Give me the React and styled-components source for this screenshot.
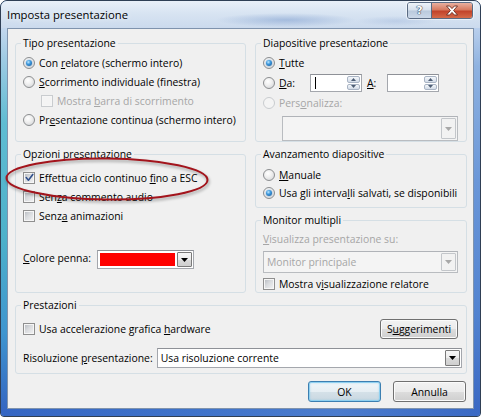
import React from "react";
import styled, { createGlobalStyle, css } from "styled-components";

const FONT = `"Open Sans", "Noto Sans", "DejaVu Sans", sans-serif`;

const GlobalStyle = createGlobalStyle`
  html, body { margin: 0; padding: 0; background: #ffffff; }
  * { box-sizing: border-box; }
`;

const Window = styled.div`
  width: 481px;
  height: 417px;
  border: 1px solid #2f3f55;
  border-radius: 7px 7px 4px 4px;
  overflow: hidden;
  display: flex;
  flex-direction: column;
  font-family: ${FONT};
  font-size: 10.4px;
  color: #000;
  background: #4f86cf;
  box-shadow: inset 0 0 0 1px rgba(255, 255, 255, 0.45);
`;

const TitleBar = styled.div`
  height: 27px;
  flex: none;
  display: flex;
  align-items: flex-start;
  padding: 0 7px 0 6px;
  background:
    radial-gradient(ellipse 70px 7px at 285px 19px, rgba(110, 145, 200, 0.45), rgba(110, 145, 200, 0) 100%),
    radial-gradient(ellipse 40px 5px at 395px 20px, rgba(150, 175, 215, 0.35), rgba(150, 175, 215, 0) 100%),
    linear-gradient(to bottom, #e9f0f8 0%, #d8e4f2 45%, #cbdaed 100%);
`;

const TitleText = styled.div`
  font-size: 11.3px;
  line-height: 14px;
  margin-top: 7px;
  color: #000;
  text-shadow: 0 0 6px rgba(255, 255, 255, 0.9);
`;

const CaptionButtons = styled.div`
  margin-left: auto;
  margin-top: 1px;
  display: flex;
  height: 17px;
  border: 1px solid #5a6b83;
  border-radius: 3px;
  overflow: hidden;
  box-shadow: 0 0 0 1px rgba(255, 255, 255, 0.5);
`;

const HelpButton = styled.div`
  width: 24px;
  display: flex;
  align-items: center;
  justify-content: center;
  border-right: 1px solid #5a6b83;
  background: linear-gradient(to bottom, #eef3f9 0%, #d6e0ec 48%, #b9c9dc 52%, #cbd8e8 100%);
`;

const HelpGlyph = styled.span`
  font-family: "DejaVu Sans", sans-serif;
  font-weight: bold;
  font-size: 11px;
  line-height: 12px;
  color: #ffffff;
  text-shadow: 0 0 1px #2d3d57, 0 0 1px #2d3d57, 0 0 1px #2d3d57;
`;

const CloseButton = styled.div`
  width: 40px;
  display: flex;
  align-items: center;
  justify-content: center;
  background: linear-gradient(to bottom, #e8b0a0 0%, #d77a60 45%, #c2432a 55%, #d56a48 100%);
`;

const Middle = styled.div`
  flex: 1;
  display: flex;
`;

const Edge = styled.div`
  width: 6px;
  flex: none;
  background: ${(p) =>
    p.$side === "left"
      ? "linear-gradient(to bottom, #c3d7ee 0%, #9fcbe4 8%, #5fbcd2 25%, #4db1ca 55%, #3f95cf 80%, #3467c2 100%)"
      : "linear-gradient(to bottom, #b9cfec 0%, #8fb2e0 10%, #6b97d8 40%, #5283d0 75%, #3b69c3 100%)"};
`;

const BottomEdge = styled.div`
  height: 7px;
  flex: none;
  background: linear-gradient(to right, #3566c3 0%, #3f73ca 40%, #4b7ccd 70%, #3a69c4 100%);
`;

const Client = styled.div`
  width: 467px;
  height: 381px;
  flex: none;
  background: #f0f0f0;
  border: 1px solid #7f93ad;
  padding: 14px 6px 0 7px;
  display: flex;
  flex-direction: column;
  gap: 12px;
`;

const TwoCols = styled.div`
  display: grid;
  grid-template-columns: 231px 212px;
  column-gap: 9px;
`;

const Stack = styled.div`
  display: flex;
  flex-direction: column;
  gap: 12px;
`;

const Group = styled.div`
  position: relative;
  height: ${(p) => p.$h}px;
  border: 1px solid #d5dfe5;
  border-radius: 3px;
  padding: 0 8px 0 7px;
  display: flex;
  flex-direction: column;
`;

const Caption = styled.div`
  align-self: flex-start;
  height: 14px;
  line-height: 14px;
  margin: -8px 0 ${(p) => p.$gap ?? 3}px -2px;
  padding: 0 2px;
  background: #f0f0f0;
  white-space: nowrap;
`;

const Row = styled.div`
  display: flex;
  align-items: center;
  height: ${(p) => p.$h ?? 19}px;
  margin-top: ${(p) => p.$mt ?? 0}px;
  padding-left: ${(p) => p.$indent ?? 0}px;
  gap: 4px;
  flex: none;
  white-space: nowrap;
  color: ${(p) => (p.$disabled ? "#a6a6a6" : "#000")};
`;

const Label = styled.span`
  line-height: 14px;
  ${(p) =>
    p.$w &&
    css`
      width: ${p.$w}px;
      flex: none;
    `}
  margin-left: ${(p) => p.$ml ?? 0}px;
  margin-top: ${(p) => p.$lift ? `-${p.$lift}px` : "0"};
`;

const U = styled.span`
  text-decoration: underline;
  text-underline-offset: 1px;
`;

const Radio = styled.span`
  width: 12px;
  height: 12px;
  flex: none;
  border-radius: 50%;
  border: 1px solid ${(p) => (p.$disabled ? "#c9cccf" : "#8c8e90")};
  background: ${(p) =>
    p.$disabled
      ? "#f4f4f4"
      : "radial-gradient(circle at 40% 35%, #ffffff 0%, #f0f0f0 40%, #cfd1d4 100%)"};
  display: inline-flex;
  align-items: center;
  justify-content: center;
  ${(p) =>
    p.$checked &&
    css`
      &::after {
        content: "";
        width: 6px;
        height: 6px;
        border-radius: 50%;
        background: radial-gradient(circle at 40% 35%, #bfe8ff 0%, #3c98dc 40%, #0d4f93 100%);
        box-shadow: 0 0 1px 0.5px rgba(40, 110, 180, 0.35);
      }
    `}
`;

const Box = styled.span`
  width: 12px;
  height: 12px;
  flex: none;
  border: 1px solid ${(p) => (p.$disabled ? "#c9cccf" : "#8f8f8f")};
  background: ${(p) =>
    p.$disabled
      ? "#f4f4f4"
      : "linear-gradient(135deg, #b3b7bd 0%, #d9dbde 45%, #f4f4f5 100%)"};
  box-shadow: inset 0 0 0 1px #f6f6f6;
  display: inline-flex;
  align-items: center;
  justify-content: center;
`;

const CheckMark = () => (
  <svg width="9" height="9" viewBox="0 0 9 9">
    <path d="M1.2 4.6 L3.4 7.2 L7.8 1.4" fill="none" stroke="#30508c" strokeWidth="1.6" strokeLinecap="round" strokeLinejoin="round" />
  </svg>
);

const Field = styled.div`
  display: flex;
  align-items: stretch;
  flex: ${(p) => (p.$w ? "none" : "1")};
  width: ${(p) => (p.$w ? `${p.$w}px` : "auto")};
  height: ${(p) => p.$h ?? 18}px;
  margin-left: ${(p) => (p.$auto ? "auto" : `${p.$ml ?? 0}px`)};
  margin-top: ${(p) => p.$mt ?? 0}px;
  border: 1px solid ${(p) => (p.$disabled ? "#b9bcc0" : "#a4a7ad")};
  border-top-color: ${(p) => (p.$disabled ? "#b0b3b8" : "#8e9197")};
  background: ${(p) => (p.$disabled ? "#f4f4f4" : "#ffffff")};
  padding: 1px;
`;

const FieldText = styled.span`
  flex: 1;
  display: flex;
  align-items: center;
  padding-left: 2px;
  line-height: 14px;
  color: ${(p) => (p.$disabled ? "#a6a6a6" : "#000")};
  white-space: nowrap;
  overflow: hidden;
`;

const DropBtn = styled.span`
  width: 15px;
  flex: none;
  display: flex;
  align-items: center;
  justify-content: center;
  border: 1px solid ${(p) => (p.$disabled ? "#c3c6ca" : "#7a7a7a")};
  border-radius: 1px;
  background: ${(p) =>
    p.$disabled
      ? "#f2f2f2"
      : "linear-gradient(to bottom, #f7f7f7 0%, #ececec 50%, #dadada 51%, #cfcfcf 100%)"};
`;

const Arrow = ({ color = "#000" }) => (
  <svg width="7" height="4" viewBox="0 0 7 4">
    <polygon points="0,0 7,0 3.5,4" fill={color} />
  </svg>
);

const Swatch = styled.span`
  flex: 1;
  margin: 1px 2px 1px 1px;
  background: #ff0000;
`;

const Caret = styled.span`
  width: 1px;
  height: 12px;
  align-self: center;
  margin-left: 3px;
  background: #000;
`;

const SpinCol = styled.span`
  margin-left: auto;
  width: 13px;
  flex: none;
  display: flex;
  flex-direction: column;
  gap: 1px;
`;

const SpinBtn = styled.span`
  flex: 1;
  display: flex;
  align-items: center;
  justify-content: center;
  border: 1px solid #a9b4c4;
  border-radius: 2px;
  background: linear-gradient(to bottom, #f5f8fb 0%, #e3e9f1 50%, #d3dce8 100%);
`;

const Tri = ({ up }) => (
  <svg width="5" height="3" viewBox="0 0 5 3">
    <polygon points={up ? "0,3 5,3 2.5,0" : "0,0 5,0 2.5,3"} fill="#4d5d74" />
  </svg>
);

const SpinBox = ({ caret }) => (
  <Field $w={52} $h={18}>
    {caret ? <Caret /> : null}
    <SpinCol>
      <SpinBtn>
        <Tri up />
      </SpinBtn>
      <SpinBtn>
        <Tri />
      </SpinBtn>
    </SpinCol>
  </Field>
);

const Button = styled.div`
  width: ${(p) => p.$w}px;
  height: ${(p) => p.$h ?? 21}px;
  flex: none;
  margin-left: ${(p) => (p.$auto ? "auto" : "0")};
  display: flex;
  align-items: center;
  justify-content: center;
  line-height: 14px;
  border-radius: 3px;
  border: 1px solid ${(p) => (p.$default ? "#3c7fb1" : "#707070")};
  background: ${(p) =>
    p.$default
      ? "linear-gradient(to bottom, #f1f6f9 0%, #e6eef3 50%, #d5e1e8 51%, #c9d7e1 100%)"
      : "linear-gradient(to bottom, #f2f2f2 0%, #ebebeb 50%, #dddddd 51%, #cfcfcf 100%)"};
  box-shadow: ${(p) =>
    p.$default ? "inset 0 0 0 1px #8fd0f0, inset 0 0 2px 1px rgba(120, 200, 240, 0.5)" : "inset 0 0 0 1px #fbfbfb"};
`;

const ButtonRow = styled.div`
  display: flex;
  justify-content: flex-end;
  gap: 12px;
  margin-top: -5px;
  padding-right: 1px;
`;

const Ellipse = styled.svg`
  position: absolute;
  left: -11px;
  top: 2px;
  overflow: visible;
  pointer-events: none;
  filter: drop-shadow(1px 2px 1.5px rgba(0, 0, 0, 0.35));
`;

export default function App() {
  return (
    <>
      <GlobalStyle />
      <Window>
        <TitleBar>
          <TitleText>Imposta presentazione</TitleText>
          <CaptionButtons>
            <HelpButton>
              <HelpGlyph>?</HelpGlyph>
            </HelpButton>
            <CloseButton>
              <svg width="14" height="11" viewBox="0 0 14 11">
                <path
                  d="M1.5 1 H4.6 L7 3.6 L9.4 1 H12.5 L8.6 5.5 L12.5 10 H9.4 L7 7.4 L4.6 10 H1.5 L5.4 5.5 Z"
                  fill="#ffffff"
                  stroke="#6a2a1e"
                  strokeWidth="0.9"
                  strokeLinejoin="round"
                />
              </svg>
            </CloseButton>
          </CaptionButtons>
        </TitleBar>
        <Middle>
          <Edge $side="left" />
          <Client>
            <TwoCols>
              <Group $h={99}>
                <Caption>Tipo presentazione</Caption>
                <Row>
                  <Radio $checked />
                  <Label>
                    Con <U>r</U>elatore (schermo intero)
                  </Label>
                </Row>
                <Row>
                  <Radio />
                  <Label>
                    <U>S</U>corrimento individuale (finestra)
                  </Label>
                </Row>
                <Row $indent={18} $disabled>
                  <Box $disabled />
                  <Label>
                    Mostra <U>b</U>arra di scorrimento
                  </Label>
                </Row>
                <Row>
                  <Radio />
                  <Label>
                    Pr<U>e</U>sentazione continua (schermo intero)
                  </Label>
                </Row>
              </Group>
              <Group $h={99}>
                <Caption>Diapositive presentazione</Caption>
                <Row $h={20}>
                  <Radio $checked />
                  <Label>
                    <U>T</U>utte
                  </Label>
                </Row>
                <Row $h={20}>
                  <Radio />
                  <Label $w={27}>
                    <U>D</U>a:
                  </Label>
                  <SpinBox caret />
                  <Label $w={16} $ml={1}>
                    <U>A</U>:
                  </Label>
                  <SpinBox />
                </Row>
                <Row $h={20} $disabled>
                  <Radio $disabled />
                  <Label>
                    Pers<U>o</U>nalizza:
                  </Label>
                </Row>
                <Field $disabled $ml={19} $mt={3} $h={18}>
                  <FieldText $disabled />
                  <DropBtn $disabled>
                    <Arrow color="#a8a8a8" />
                  </DropBtn>
                </Field>
              </Group>
            </TwoCols>
            <TwoCols>
              <Group $h={139}>
                <Caption $gap={7}>Opzioni presentazione</Caption>
                <Row>
                  <Box>
                    <CheckMark />
                  </Box>
                  <Label>
                    Effettua ciclo continuo <U>f</U>ino a ESC
                  </Label>
                </Row>
                <Row>
                  <Box />
                  <Label>
                    Sen<U>z</U>a commento audio
                  </Label>
                </Row>
                <Row>
                  <Box />
                  <Label>
                    Senz<U>a</U> animazioni
                  </Label>
                </Row>
                <Row $mt={25} $h={19}>
                  <Label $w={70} $lift={3}>
                    <U>C</U>olore penna:
                  </Label>
                  <Field $w={97} $h={19}>
                    <Swatch />
                    <DropBtn>
                      <Arrow />
                    </DropBtn>
                  </Field>
                </Row>
                <Ellipse width="204" height="44" viewBox="0 0 204 44">
                  <ellipse cx="102" cy="22" rx="100.5" ry="20.5" fill="none" stroke="#a3141c" strokeWidth="2" transform="rotate(0.6 102 22)" />
                </Ellipse>
              </Group>
              <Stack>
                <Group $h={54}>
                  <Caption $gap={5}>Avanzamento diapositive</Caption>
                  <Row $h={18}>
                    <Radio />
                    <Label>
                      <U>M</U>anuale
                    </Label>
                  </Row>
                  <Row $h={18}>
                    <Radio $checked />
                    <Label>
                      Usa gli interva<U>l</U>li salvati, se disponibili
                    </Label>
                  </Row>
                </Group>
                <Group $h={73}>
                  <Caption $gap={3}>Monitor multipli</Caption>
                  <Row $h={18} $disabled>
                    <Label>
                      <U>V</U>isualizza presentazione su:
                    </Label>
                  </Row>
                  <Field $disabled $mt={3} $h={18}>
                    <FieldText $disabled>Monitor principale</FieldText>
                    <DropBtn $disabled>
                      <Arrow color="#a8a8a8" />
                    </DropBtn>
                  </Field>
                  <Row $h={17} $mt={2}>
                    <Box />
                    <Label>
                      Mostra v<U>i</U>sualizzazione relatore
                    </Label>
                  </Row>
                </Group>
              </Stack>
            </TwoCols>
            <Group $h={69}>
              <Caption $gap={6}>Prestazioni</Caption>
              <Row $h={22}>
                <Box />
                <Label>
                  Usa accelerazione grafica <U>h</U>ardware
                </Label>
                <Button $w={78} $h={20} $auto>
                  <span>
                    S<U>u</U>ggerimenti
                  </span>
                </Button>
              </Row>
              <Row $h={21} $mt={7}>
                <Label>
                  Risoluzione <U>p</U>resentazione:
                </Label>
                <Field $w={305} $h={20} $auto>
                  <FieldText>Usa risoluzione corrente</FieldText>
                  <DropBtn>
                    <Arrow />
                  </DropBtn>
                </Field>
              </Row>
            </Group>
            <ButtonRow>
              <Button $w={73} $default>
                OK
              </Button>
              <Button $w={73}>Annulla</Button>
            </ButtonRow>
          </Client>
          <Edge $side="right" />
        </Middle>
        <BottomEdge />
      </Window>
    </>
  );
}
